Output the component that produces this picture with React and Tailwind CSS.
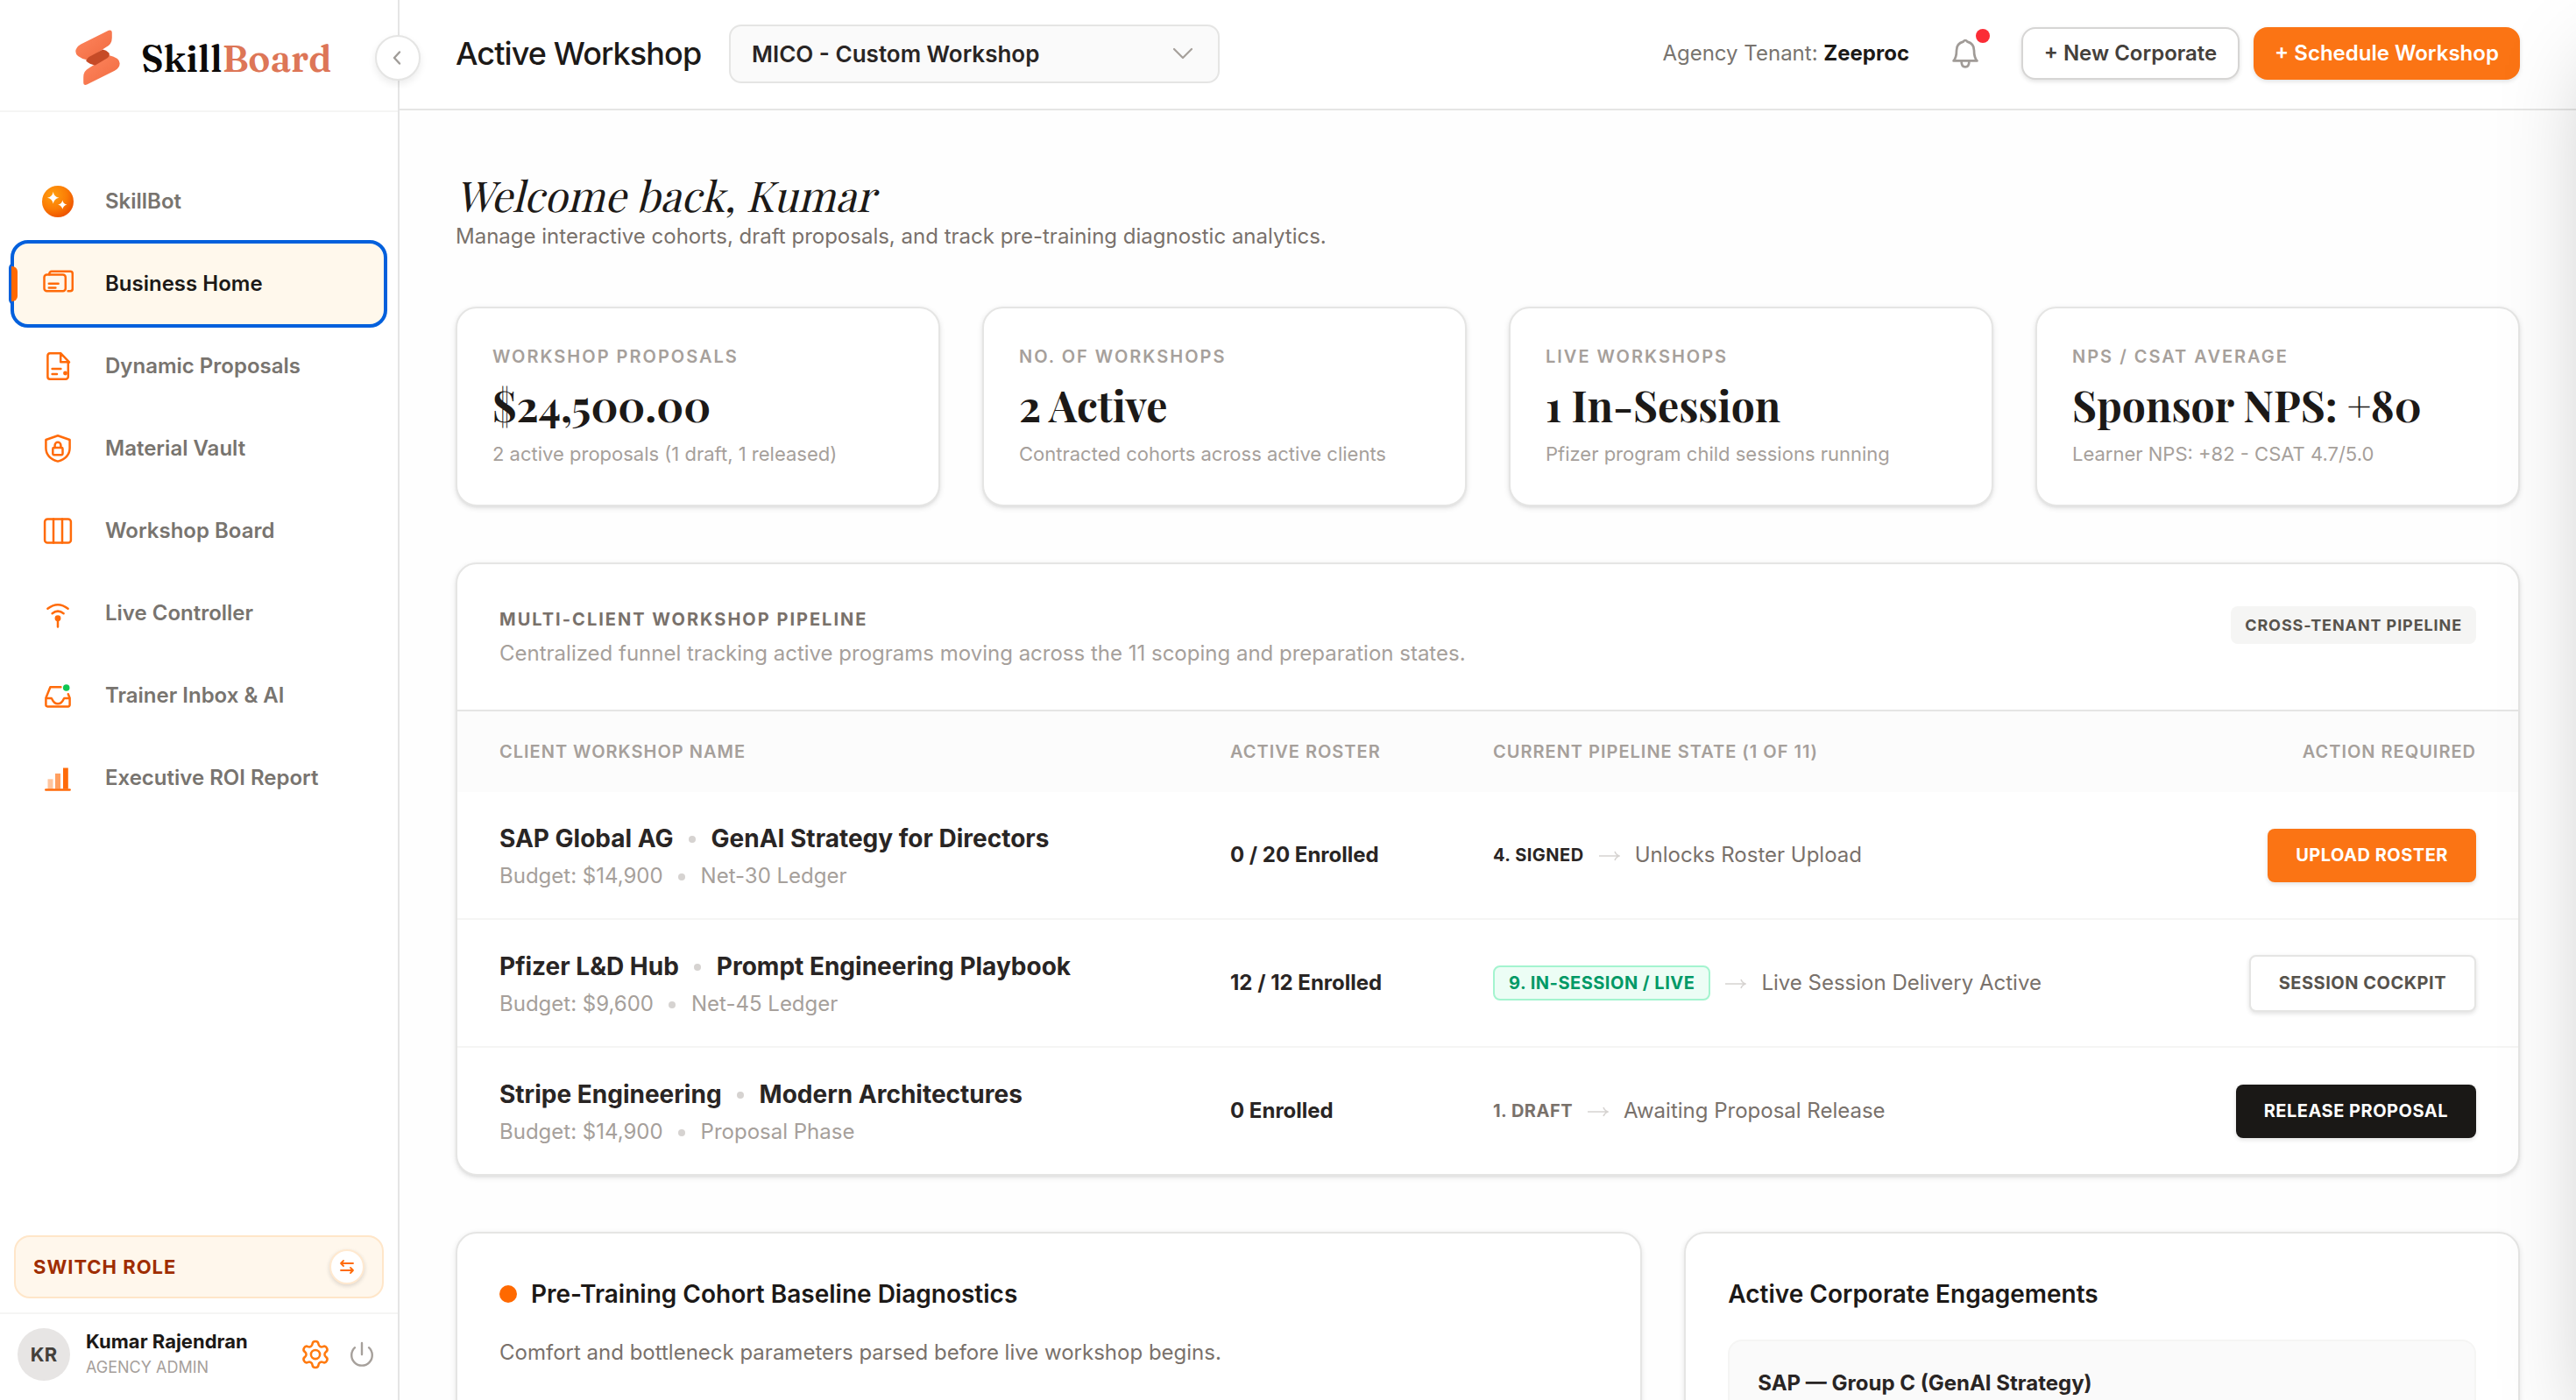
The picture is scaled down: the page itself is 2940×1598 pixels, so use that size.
const stats = [
  { label: 'WORKSHOP PROPOSALS', value: '$24,500.00', note: '2 active proposals (1 draft, 1 released)' },
  { label: 'NO. OF WORKSHOPS', value: '2 Active', note: 'Contracted cohorts across active clients' },
  { label: 'LIVE WORKSHOPS', value: '1 In-Session', note: 'Pfizer program child sessions running' },
  { label: 'NPS / CSAT AVERAGE', value: 'Sponsor NPS: +80', note: 'Learner NPS: +82 - CSAT 4.7/5.0' },
];

const pipeline = [
  {
    client: 'SAP Global AG',
    program: 'GenAI Strategy for Directors',
    budget: 'Budget: $14,900',
    terms: 'Net-30 Ledger',
    roster: '0 / 20 Enrolled',
    state: '4. SIGNED',
    stateClass: 'text-[#292524]',
    next: 'Unlocks Roster Upload',
    action: 'UPLOAD ROSTER',
    actionClass: 'h-[61px] bg-[#fb7414] px-8 text-white',
  },
  {
    client: 'Pfizer L&D Hub',
    program: 'Prompt Engineering Playbook',
    budget: 'Budget: $9,600',
    terms: 'Net-45 Ledger',
    roster: '12 / 12 Enrolled',
    state: '9. IN-SESSION / LIVE',
    stateClass: 'flex h-10 items-center rounded-lg border-2 border-[#a4f4cf] bg-[#ecfdf5] px-4 text-[#009966]',
    next: 'Live Session Delivery Active',
    action: 'SESSION COCKPIT',
    actionClass: 'h-[65px] border-2 border-[#e5e5e4] bg-white px-8 text-[#57534d]',
  },
  {
    client: 'Stripe Engineering',
    program: 'Modern Architectures',
    budget: 'Budget: $14,900',
    terms: 'Proposal Phase',
    roster: '0 Enrolled',
    state: '1. DRAFT',
    stateClass: 'text-[#79716b]',
    next: 'Awaiting Proposal Release',
    action: 'RELEASE PROPOSAL',
    actionClass: 'h-[61px] bg-[#1a1816] px-8 text-white',
  },
];

const NavIcon = ({ children }) => (
  <svg viewBox="0 0 36 36" className="size-9 shrink-0" fill="none" stroke="#ff6b0a" strokeWidth="2.5" strokeLinecap="round" strokeLinejoin="round">
    {children}
  </svg>
);

const navItems = [
  {
    label: 'SkillBot',
    icon: (
      <NavIcon>
        <defs>
          <radialGradient id="bot" cx="0.35" cy="0.3" r="0.8">
            <stop offset="0" stopColor="#ff9f0f" />
            <stop offset="0.55" stopColor="#fb7c05" />
            <stop offset="1" stopColor="#ea4a00" />
          </radialGradient>
        </defs>
        <circle cx="18" cy="18" r="18" fill="url(#bot)" stroke="none" />
        <path d="M12.7 7q1 5.7 6.7 6.7q-5.7 1-6.7 6.7q-1-5.7-6.7-6.7q5.7-1 6.7-6.7z" fill="#fff" stroke="none" />
        <path d="M23.3 16.6q.9 4.3 5.1 5.1q-4.2.8-5.1 5.1q-.9-4.3-5.1-5.1q4.2-.8 5.1-5.1z" fill="#fff" stroke="none" />
      </NavIcon>
    ),
  },
  {
    label: 'Business Home',
    active: true,
    icon: (
      <NavIcon>
        <rect x="2.5" y="7.6" width="24.3" height="18.6" rx="3" />
        <path d="M8.3 7.3V6.4A2.6 2.6 0 0 1 10.9 3.8H32.2A2.6 2.6 0 0 1 34.8 6.4V23.6A2.6 2.6 0 0 1 32.2 26.2H29.6M7.8 17.7H18.6M7.8 22.6H15.4" />
      </NavIcon>
    ),
  },
  {
    label: 'Dynamic Proposals',
    icon: (
      <NavIcon>
        <path d="M21.2 3.2H9A2.8 2.8 0 0 0 6.4 6V30A2.8 2.8 0 0 0 9 32.8H27A2.8 2.8 0 0 0 29.8 30V13.4H31L21.2 3.2V13.2H30M11.6 21.1H21.4M11.6 27H17" />
        <circle cx="26.5" cy="26" r="1.2" />
      </NavIcon>
    ),
  },
  {
    label: 'Material Vault',
    icon: (
      <NavIcon>
        <path d="M18 3.2L31.6 8V17.2C31.6 25 26 30.2 18 32.6C10 30.2 4.4 25 4.4 17.2V8Z" />
        <rect x="12.3" y="17" width="11.2" height="8.3" rx="1.2" />
        <path d="M14.6 17V14.2A3.4 3.4 0 0 1 21.4 14.2V17" />
      </NavIcon>
    ),
  },
  {
    label: 'Workshop Board',
    icon: (
      <NavIcon>
        <rect x="3.1" y="4.4" width="29.8" height="27.2" rx="3.2" />
        <path d="M13 4.4V31.6M23 4.4V31.6" />
      </NavIcon>
    ),
  },
  {
    label: 'Live Controller',
    icon: (
      <NavIcon>
        <path d="M6.4 12.8Q18 3.6 29.6 12.8M11.6 18.2Q18 13 24.6 18.2M18 25V33.6" />
        <circle cx="18" cy="23.7" r="2.2" fill="#ff6b0a" />
      </NavIcon>
    ),
  },
  {
    label: 'Trainer Inbox & AI',
    icon: (
      <NavIcon>
        <path d="M21.4 8.2H9.4L4.4 20.6V28.6A1.8 1.8 0 0 0 6.2 30.4H29.8A1.8 1.8 0 0 0 31.6 28.6V20.6L29.8 16.2M4.6 21H10.6C11.8 21 12 27.2 18 27.2S24.2 21 25.4 21H31.4" />
        <circle cx="27.7" cy="9" r="3.8" fill="#10c652" stroke="none" />
      </NavIcon>
    ),
  },
  {
    label: 'Executive ROI Report',
    icon: (
      <NavIcon>
        <path d="M6.5 19.3H12.5V30.6H6.5z" fill="#ff6b0a" stroke="none" opacity="0.4" />
        <path d="M15 12.9H21V30.6H15z" fill="#ff6b0a" stroke="none" opacity="0.65" />
        <path d="M24 6.5H29.8V30.6H24z" fill="#ff6b0a" stroke="none" />
        <path d="M4.3 31.4H31.6" />
      </NavIcon>
    ),
  },
];

const Logo = () => (
  <div className="flex h-32 shrink-0 items-center border-b-2 border-[#f5f5f4] pl-[86px]">
    <svg viewBox="197 40 155 195" className="mt-[5px] h-[65px] w-[51px] shrink-0">
      <defs>
        <linearGradient id="mark" x1="0" y1="0" x2="1" y2="1">
          <stop offset="0" stopColor="#ff875f" />
          <stop offset="1" stopColor="#f06a40" />
        </linearGradient>
      </defs>
      <path d="M312 44Q324 40 324 52V70Q324 92 304 102L236 146Q198 137 198 118Q198 102 216 92Z" fill="url(#mark)" />
      <path d="M237 232Q225 236 225 224V206Q225 184 245 174L313 130Q351 139 351 158Q351 174 333 184Z" fill="url(#mark)" />
      <path d="M234 150Q237 139 250 133L292 110Q304 112 314 122Q318 131 308 140L266 165Q246 162 234 150Z" fill="#c64b27" />
    </svg>
    <span className="mt-[8px] ml-[24px] font-[Fraunces,'Liberation_Serif',serif] text-[42px] leading-none font-semibold text-[#0c0a09]">
      Skill<span className="text-[#dd7657]">Board</span>
    </span>
  </div>
);

const NavItem = ({ item }) =>
  item.active ? (
    <div className="relative flex h-[92px] items-center gap-9 rounded-2xl bg-[#fff8ec] pl-8 text-2xl font-semibold text-[#1c1917] outline-4 outline-[#0360dc]">
      <span className="absolute top-[22px] -left-[6px] h-[48px] w-[6px] rounded-l-lg bg-[#0360dc]" />
      <span className="absolute top-[26px] -left-[3px] h-10 w-[7px] rounded-r-md bg-[#ff6900]" />
      {item.icon}
      {item.label}
    </div>
  ) : (
    <div className="flex h-[92px] items-center gap-9 pl-8 text-2xl font-semibold text-[#78746f]">
      {item.icon}
      {item.label}
    </div>
  );

const Sidebar = () => (
  <aside className="relative flex w-[456px] shrink-0 flex-col border-r-2 border-[#e5e5e5] bg-white">
    <Logo />
    <button className="absolute top-10 -right-[26px] z-10 flex size-[52px] items-center justify-center rounded-full border-2 border-[#e5e5e4] bg-white shadow-[0_4px_8px_rgba(0,0,0,0.08)]">
      <svg viewBox="0 0 24 24" className="mr-[2px] size-6" fill="none" stroke="#a09c98" strokeWidth="2.4" strokeLinecap="round" strokeLinejoin="round">
        <path d="M15 5.5L9 12L15 18.5" />
      </svg>
    </button>
    <nav className="flex grow flex-col gap-[2px] px-4 pt-14">
      {navItems.map((item) => <NavItem key={item.label} item={item} />)}
    </nav>
    <div className="mx-4 mb-4 flex h-[72px] shrink-0 items-center justify-between rounded-[18px] border-2 border-[#ffe6c9] bg-[#fff7ec] pr-5 pl-5">
      <span className="text-[22px] font-bold tracking-[0.045em] text-[#9f2d00]">SWITCH ROLE</span>
      <span className="flex size-10 items-center justify-center rounded-full border-2 border-[#ffe9d0] bg-white shadow-[0_2px_5px_rgba(0,0,0,0.14)]">
        <svg viewBox="0 0 20 20" className="size-5" fill="none" stroke="#ff6b0a" strokeWidth="1.8" strokeLinecap="round" strokeLinejoin="round">
          <path d="M17 6H3M6 3L3 6L6 9M3 14H17M14 11L17 14L14 17" />
        </svg>
      </span>
    </div>
    <div className="flex h-[100px] shrink-0 items-center border-t-2 border-[#f5f5f4] pr-[27px] pl-5">
      <span className="-mt-[6px] flex size-[60px] items-center justify-center rounded-full bg-[#e7e5e4] text-[22px] font-bold text-[#44403b]">KR</span>
      <div className="-mt-[6px] ml-[18px] grow">
        <div className="text-[22px] leading-[30px] font-bold text-[#1c1917]">Kumar Rajendran</div>
        <div className="text-[18px] leading-[30px] text-[#a6a09b]">AGENCY ADMIN</div>
      </div>
      <svg viewBox="0 0 24 24" className="-mt-[6px] size-9" fill="none" stroke="#ff7a0f" strokeWidth="1.7" strokeLinecap="round" strokeLinejoin="round">
        <path d="M9.671 4.136a2.34 2.34 0 0 1 4.659 0 2.34 2.34 0 0 0 3.319 1.915 2.34 2.34 0 0 1 2.33 4.033 2.34 2.34 0 0 0 0 3.831 2.34 2.34 0 0 1-2.33 4.033 2.34 2.34 0 0 0-3.319 1.915 2.34 2.34 0 0 1-4.659 0 2.34 2.34 0 0 0-3.32-1.915 2.34 2.34 0 0 1-2.33-4.033 2.34 2.34 0 0 0 0-3.831A2.34 2.34 0 0 1 6.35 6.051a2.34 2.34 0 0 0 3.319-1.915" />
        <circle cx="12" cy="12" r="3.4" />
      </svg>
      <svg viewBox="0 0 28 30" className="-mt-[6px] ml-[21px] h-[30px] w-7" fill="none" stroke="#a6a09b" strokeWidth="2.4" strokeLinecap="round">
        <path d="M14 2V15M6 7.2A11.8 11.8 0 1 0 22 7.2" />
      </svg>
    </div>
  </aside>
);

const Header = () => (
  <header className="flex h-[126px] shrink-0 items-center border-b-2 border-[#e5e5e4] bg-white px-16 pb-[2px]">
    <h1 className="w-[312px] text-[36px] font-medium tracking-[-0.025em] whitespace-nowrap text-[#1c1917]">Active Workshop</h1>
    <div className="flex h-[67px] w-[560px] items-center justify-between rounded-[14px] border-2 border-[#e5e5e4] bg-[#fafafa] pr-[26px] pl-6 text-[26px] font-semibold text-[#292524]">
      MICO - Custom Workshop
      <svg viewBox="0 0 28 16" className="h-4 w-7" fill="none" stroke="#a6a09b" strokeWidth="2.2" strokeLinecap="round" strokeLinejoin="round">
        <path d="M4 3L14 13L24 3" />
      </svg>
    </div>
    <div className="ml-auto flex items-center">
      <span className="text-2xl text-[#78746f]">
        Agency Tenant: <b className="font-bold text-[#1c1917]">Zeeproc</b>
      </span>
      <span className="relative mr-[49px] ml-[49px]">
        <svg viewBox="0 0 30 34" className="h-[34px] w-[30px]" fill="none" stroke="#a09b97" strokeWidth="2.7" strokeLinecap="round" strokeLinejoin="round">
          <path d="M12.6 3.6Q15 0.4 17.4 3.6C22.6 5 25 8.6 25 13.4C25 19.6 25.6 22.2 28.4 25.4H1.6C4.4 22.2 5 19.6 5 13.4C5 8.6 7.4 5 12.6 3.6ZM10.6 26Q10.6 32.4 15 32.4T19.4 26" />
        </svg>
        <span className="absolute -top-[11px] left-[27px] size-4 rounded-full bg-[#fb2c36]" />
      </span>
      <button className="flex h-[60px] w-[249px] items-center justify-center rounded-2xl border-2 border-[#d6d5d4] bg-white text-2xl font-semibold text-[#44403b] shadow-[0_2px_5px_rgba(0,0,0,0.12)]">+ New Corporate</button>
      <button className="ml-4 flex h-[60px] w-[304px] items-center justify-center rounded-2xl bg-[#fb7414] text-2xl font-semibold text-white shadow-[0_2px_5px_rgba(0,0,0,0.12)]">+ Schedule Workshop</button>
    </div>
  </header>
);

const StatCard = ({ stat }) => (
  <div className="h-[228px] rounded-3xl border-2 border-[#e5e5e4] bg-white p-10 shadow-[0_2px_6px_rgba(0,0,0,0.1),0_2px_4px_-2px_rgba(0,0,0,0.1)]">
    <div className="text-xl leading-[30px] font-semibold tracking-[0.1em] text-[#a6a09b]">{stat.label}</div>
    <div className="mt-2 font-['Playfair_Display','Liberation_Serif',serif] text-5xl leading-[64px] font-bold whitespace-nowrap text-[#1c1917]">{stat.value}</div>
    <div className="mt-2 text-[22px] leading-[33px] text-[#a6a09b]">{stat.note}</div>
  </div>
);

const Arrow = () => (
  <svg viewBox="0 0 26 14" className="h-[14px] w-[26px] shrink-0" fill="none" stroke="#d6d3d1" strokeWidth="1.6">
    <path d="M1 8H24M19 3Q20.5 7 24.5 8Q20.5 9 19 13" />
  </svg>
);

const PipelineRow = ({ row }) => (
  <div className="grid h-[146px] grid-cols-[834px_300px_1fr_auto] items-center border-b-2 border-[#f5f5f4] px-12 last:h-[144px] last:border-b-0">
    <div className="mt-[1px]">
      <div className="flex items-center text-[28px] leading-[42px] font-bold text-[#292524]">
        {row.client}
        <span className="mx-[17.5px] mt-[3px] size-2 rounded-full bg-[#d6d3d1]" />
        {row.program}
      </div>
      <div className="mt-1 flex items-center text-2xl leading-9 text-[#a6a09b]">
        {row.budget}
        <span className="mx-[17.5px] mt-[2px] size-2 rounded-full bg-[#d6d3d1]" />
        {row.terms}
      </div>
    </div>
    <div className="text-2xl font-bold text-[#292524]">{row.roster}</div>
    <div className="flex items-center gap-4">
      <span className={`text-xl font-bold tracking-[0.025em] ${row.stateClass}`}>{row.state}</span>
      <Arrow />
      <span className="text-2xl text-[#79716b]">{row.next}</span>
    </div>
    <button className={`flex items-center rounded-lg text-xl font-bold tracking-[0.025em] shadow-[0_2px_5px_rgba(0,0,0,0.12)] ${row.actionClass}`}>{row.action}</button>
  </div>
);

const Pipeline = () => (
  <section className="mt-16 overflow-hidden rounded-3xl border-2 border-[#e5e5e4] bg-white shadow-[0_2px_6px_rgba(0,0,0,0.1),0_2px_4px_-2px_rgba(0,0,0,0.1)]">
    <div className="flex h-[168px] items-start justify-between border-b-2 border-[#e5e5e4] px-12 pt-12">
      <div>
        <h3 className="text-xl leading-[30px] font-bold tracking-[0.1em] text-[#79716b]">MULTI-CLIENT WORKSHOP PIPELINE</h3>
        <p className="mt-[6px] text-2xl leading-9 text-[#a6a09b]">Centralized funnel tracking active programs moving across the 11 scoping and preparation states.</p>
      </div>
      <span className="flex h-[43px] items-center rounded-lg bg-[#f5f5f4] px-4 text-[18px] font-bold tracking-[0.05em] text-[#57534d]">CROSS-TENANT PIPELINE</span>
    </div>
    <div className="grid h-[92px] grid-cols-[834px_300px_1fr_auto] items-center bg-[#fcfcfc] px-12 text-xl font-semibold tracking-[0.05em] text-[#a6a09b]">
      <span>CLIENT WORKSHOP NAME</span>
      <span>ACTIVE ROSTER</span>
      <span>CURRENT PIPELINE STATE (1 OF 11)</span>
      <span>ACTION REQUIRED</span>
    </div>
    <div>
      {pipeline.map((row) => <PipelineRow key={row.client} row={row} />)}
    </div>
  </section>
);

export default function App() {
  return (
    <div className="relative flex h-[1598px] w-[2940px] overflow-hidden bg-[#fefefe] font-[Inter,sans-serif]">
      <Sidebar />
      <div className="flex grow flex-col">
        <Header />
        <main className="px-16 pt-[66px]">
          {/* slanted roman, the italic cut has a swash K */}
          <h2 className="origin-[0_50px] transform-[skewX(-14deg)] font-['Playfair_Display','Liberation_Serif',serif] text-5xl leading-[60px] text-[#1c1917]">Welcome back, Kumar</h2>
          <p className="text-2xl leading-9 text-[#79716b]">Manage interactive cohorts, draft proposals, and track pre-training diagnostic analytics.</p>
          <div className="mt-[62px] grid grid-cols-4 gap-12">
            {stats.map((stat) => <StatCard key={stat.label} stat={stat} />)}
          </div>
          <Pipeline />
          <div className="mt-16 grid grid-cols-12 gap-12">
            <section className="col-span-7 h-[400px] rounded-3xl border-2 border-[#e5e5e4] bg-white px-12 pt-12 shadow-[0_2px_6px_rgba(0,0,0,0.1)]">
              <h3 className="flex items-center gap-4 text-[28px] leading-[42px] font-semibold text-[#1c1917]">
                <span className="size-5 rounded-full bg-[#ff6900]" />
                Pre-Training Cohort Baseline Diagnostics
              </h3>
              <p className="mt-7 text-2xl leading-9 text-[#79716b]">Comfort and bottleneck parameters parsed before live workshop begins.</p>
            </section>
            <section className="col-span-5 h-[400px] rounded-3xl border-2 border-[#e5e5e4] bg-white px-12 pt-12 shadow-[0_2px_6px_rgba(0,0,0,0.1)]">
              <h3 className="text-[28px] leading-[42px] font-semibold text-[#1c1917]">Active Corporate Engagements</h3>
              <div className="mt-[31px] h-[200px] rounded-2xl border-2 border-[#f5f5f4] bg-[#fafafa] px-8 pt-[30px] text-2xl leading-9 font-bold text-[#292524]">SAP — Group C (GenAI Strategy)</div>
            </section>
          </div>
        </main>
      </div>
      {/* closed drawer parked past the right edge, only its shadow shows */}
      <div className="absolute inset-y-0 left-full z-20 w-[900px] bg-white shadow-[0_50px_100px_-24px_rgba(0,0,0,0.25)]" />
    </div>
  );
}
